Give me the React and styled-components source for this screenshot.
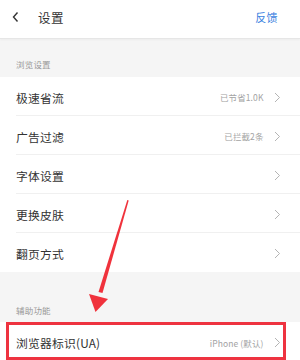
import React from 'react';
import styled, { createGlobalStyle } from 'styled-components';

const GlobalStyle = createGlobalStyle`
  html, body {
    margin: 0;
    padding: 0;
    background: #f5f5f5;
  }
  body {
    font-family: "Noto Sans CJK SC", "Noto Sans", sans-serif;
    -webkit-font-smoothing: antialiased;
  }
`;

const Page = styled.div`
  position: relative;
  width: 300px;
  height: 360px;
  overflow: hidden;
  background: #f5f5f5;
`;

const Header = styled.div`
  height: 39px;
  box-sizing: border-box;
  padding: 0 22px 4px 12px;
  display: flex;
  align-items: center;
  background: #fff;
  border-bottom: 1px solid #e6e6e6;
  box-shadow: 0 1px 2px rgba(0, 0, 0, 0.04);
`;

const Title = styled.span`
  margin-left: 18px;
  font-size: 12.5px;
  color: #333;
  letter-spacing: 0.4px;
  flex: 1;
`;

const Feedback = styled.span`
  font-size: 11px;
  color: #3b7fe0;
  letter-spacing: 0.4px;
`;

const SectionLabel = styled.div`
  height: ${p => p.$h}px;
  box-sizing: border-box;
  padding: 0 16px ${p => p.$pb}px;
  display: flex;
  align-items: flex-end;
  font-size: 8.5px;
  color: #999;
  letter-spacing: 0.2px;
`;

const List = styled.div`
  background: #fff;
`;

const Row = styled.div`
  height: 39px;
  box-sizing: border-box;
  margin-left: 16px;
  padding: 2px 20px 0 0;
  display: flex;
  align-items: center;
  border-bottom: ${p => (p.$last ? 'none' : '1px solid #f0f0f0')};
`;

const RowTitle = styled.span`
  flex: 1;
  font-size: 11.8px;
  color: #333;
  letter-spacing: 0.2px;
`;

const RowValue = styled.span`
  font-size: 8.5px;
  color: #a3a3a3;
  margin-right: 10px;
  letter-spacing: 0.1px;
`;

const Overlay = styled.svg`
  position: absolute;
  left: 0;
  top: 0;
  pointer-events: none;
`;

const Highlight = styled.div`
  position: absolute;
  left: 6px;
  top: 322px;
  width: 280px;
  height: 38px;
  box-sizing: border-box;
  border: 3px solid #ee3340;
`;

const Chevron = ({ color = '#ababab', w = 4.5, h = 9, sw = 0.9 }) => (
  <svg width={w + 2} height={h + 2} viewBox={`-1 -1 ${w + 2} ${h + 2}`}>
    <polyline points={`0,0 ${w},${h / 2} 0,${h}`} fill="none" stroke={color} strokeWidth={sw} strokeLinejoin="miter" />
  </svg>
);

const BackIcon = () => (
  <svg width="8" height="12" viewBox="0 0 8 12">
    <polyline points="5.5,1.5 1.5,6 5.5,10.5" fill="none" stroke="#333" strokeWidth="1.4" />
  </svg>
);

const browse = [
  { title: '极速省流', value: '已节省1.0K' },
  { title: '广告过滤', value: '已拦截2条' },
  { title: '字体设置' },
  { title: '更换皮肤' },
  { title: '翻页方式' },
];

export default function App() {
  return (
    <Page>
      <GlobalStyle />
      <Header>
        <BackIcon />
        <Title>设置</Title>
        <Feedback>反馈</Feedback>
      </Header>
      <SectionLabel $h={38} $pb={7}>浏览设置</SectionLabel>
      <List>
        {browse.map((r, i) => (
          <Row key={r.title} $last={i === browse.length - 1}>
            <RowTitle>{r.title}</RowTitle>
            {r.value && <RowValue>{r.value}</RowValue>}
            <Chevron />
          </Row>
        ))}
      </List>
      <SectionLabel $h={50} $pb={6}>辅助功能</SectionLabel>
      <List>
        <Row $last>
          <RowTitle>浏览器标识(UA)</RowTitle>
          <RowValue>iPhone (默认)</RowValue>
          <Chevron />
        </Row>
      </List>
      <Highlight />
      <Overlay width="300" height="360" viewBox="0 0 300 360">
        <polygon points="127.3,200 128.7,200.4 102.5,293 98.5,292" fill="#f0323c" />
        <polygon points="89,294 108,299 95.5,312" fill="#f0323c" />
      </Overlay>
    </Page>
  );
}
